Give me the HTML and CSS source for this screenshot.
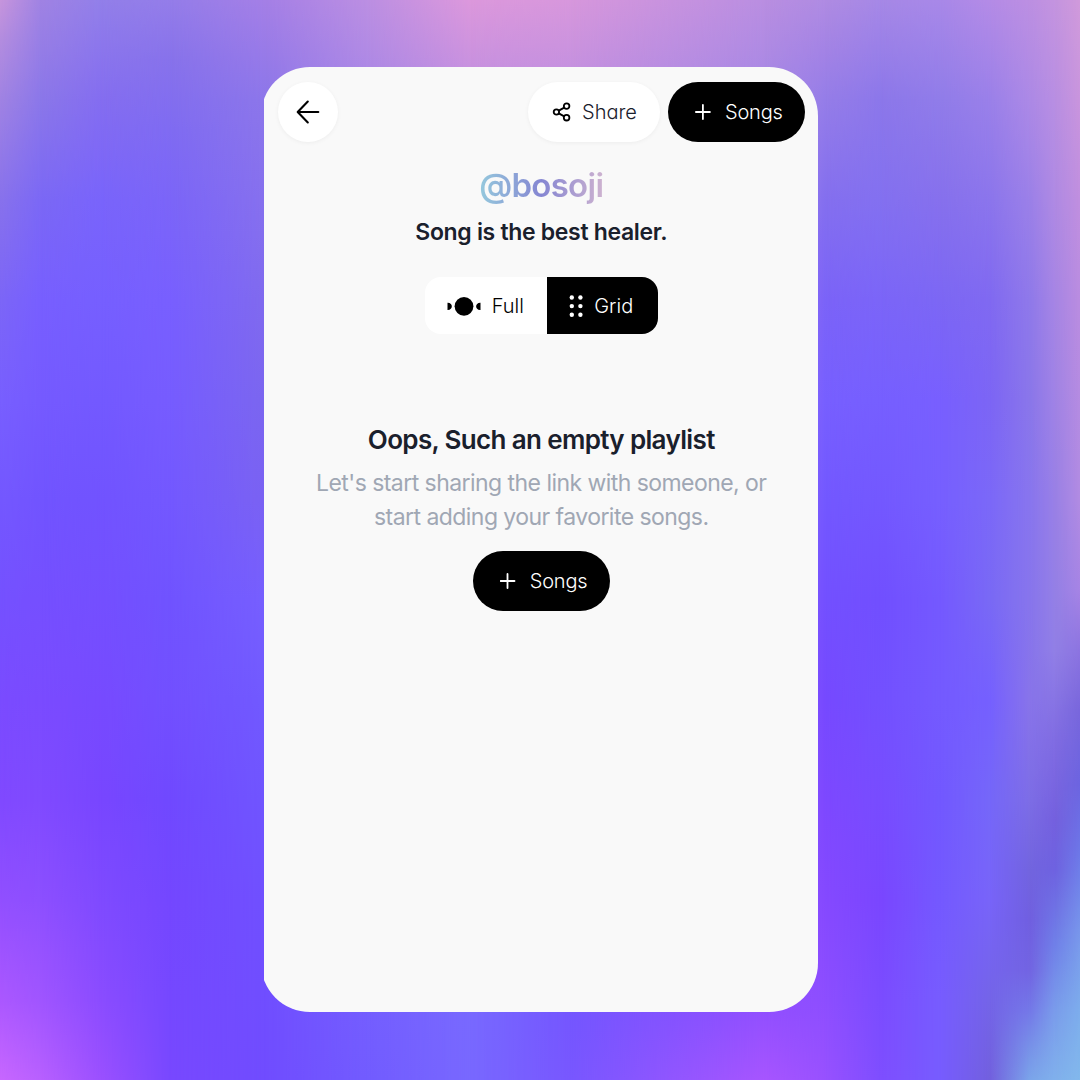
FILE: index.html
```html
<!DOCTYPE html>
<html lang="en">
<head>
<meta charset="utf-8">
<title>@bosoji</title>
<link rel="stylesheet" href="styles.css">
</head>
<body>
<div class="wash wash-1"></div>
<div class="wash wash-2"></div>
<div class="wash wash-3"></div>
<div class="wash wash-4"></div>
<div class="wash wash-5"></div>
<div class="wash wash-6"></div>
<div class="wash wash-7"></div>
<div class="wash wash-8"></div>
<div class="wash wash-9"></div>
<div class="wash wash-10"></div>
<div class="wash wash-11"></div>
<div class="wash wash-12"></div>
<div class="wash wash-13"></div>
<div class="wash wash-14"></div>
<div class="wash wash-15"></div>
<div class="wash wash-16"></div>
<main class="frame">
  <div class="card">
    <header class="topbar">
      <button class="back" aria-label="Back">
        <svg width="24" height="24" viewBox="0 0 24 24" fill="none" stroke="currentColor" stroke-width="2.1" stroke-linecap="round" stroke-linejoin="round"><path d="M22.3 12H2M11.8 1.6L1.7 12L11.8 22.4"/></svg>
      </button>
      <div class="actions">
        <button class="pill pill-light">
          <svg class="share-icon" width="20" height="20" viewBox="0 0 20 20" fill="none" stroke="#000" stroke-width="1.8"><circle cx="4.4" cy="10" r="2.7"/><circle cx="14.6" cy="4.1" r="2.8"/><circle cx="14.6" cy="15.7" r="2.8"/><path d="M6.8 8.6L12.2 5.6M6.8 11.4L12.2 14.4"/></svg>
          <span class="share-label">Share</span>
        </button>
        <button class="pill pill-dark">
          <svg width="16" height="16" viewBox="0 0 16 16" stroke="currentColor" stroke-width="1.8" stroke-linecap="round"><path d="M7.9 1V15M.9 8H14.9"/></svg>
          <span class="songs-label">Songs</span>
        </button>
      </div>
    </header>
    <h1 class="handle">@bosoji</h1>
    <p class="bio">Song is the best healer.</p>
    <div class="toggle">
      <button class="tab tab-full">
        <svg width="34" height="20" viewBox="0 0 34 20" fill="currentColor"><circle cx="17" cy="10.3" r="9.4"/><path d="M.5 6.7C6.3 6.4 6.3 14.2 .5 13.9ZM33.5 6.7C27.7 6.4 27.7 14.2 33.5 13.9Z"/></svg>
        <span class="full-label">Full</span>
      </button>
      <button class="tab tab-grid">
        <svg width="14" height="22" viewBox="0 0 14 22" fill="currentColor"><circle cx="2.8" cy="2.5" r="2.2"/><circle cx="11.4" cy="2.5" r="2.2"/><circle cx="2.8" cy="11.1" r="2.2"/><circle cx="11.4" cy="11.1" r="2.2"/><circle cx="2.8" cy="19.7" r="2.2"/><circle cx="11.4" cy="19.7" r="2.2"/></svg>
        <span class="grid-label">Grid</span>
      </button>
    </div>
    <section class="empty">
      <h2 class="empty-title">Oops, Such an empty playlist</h2>
      <p class="empty-text"><span class="line-one">Let's start sharing the link with someone, or</span><br><span class="line-two">start adding your favorite songs.</span></p>
      <button class="pill pill-dark">
        <svg width="16" height="16" viewBox="0 0 16 16" stroke="currentColor" stroke-width="1.8" stroke-linecap="round"><path d="M7.5 1V15M.5 8H14.5"/></svg>
        <span class="songs-label">Songs</span>
      </button>
    </section>
  </div>
</main>
</body>
</html>
```
FILE: styles.css
```css
* { box-sizing: border-box; }
body {
  margin: 0;
  width: 1080px;
  height: 1080px;
  overflow: hidden;
  display: grid;
  grid-template: 1080px / 1080px;
  font-family: Inter, "Liberation Sans", sans-serif;
  color: #1a202c;
}

/* Backdrop: vertical gradients cross-fading from left to right */
.wash { grid-area: 1 / 1; -webkit-mask-image: var(--fade); mask-image: var(--fade); }
.wash-1 { background: linear-gradient(#c795dc 0, #b48ddf 40px, #a083e3 100px, #8872ec 200px, #7c66f7 300px, #785fff 400px, #7458ff 500px, #7551ff 600px, #7a4bff 700px, #8049ff 800px, #914fff 900px, #ab58ff 1000px, #c867ff 1080px); }
.wash-2 { --fade: linear-gradient(90deg, transparent 0, #000 40px); background: linear-gradient(#a083e3 0, #8b77e9 100px, #7b68f5 200px, #775fff 300px, #755aff 400px, #7154ff 500px, #754fff 600px, #7a4bff 700px, #804aff 800px, #8d4fff 900px, #a055ff 1000px, #b860ff 1080px); }
.wash-3 { --fade: linear-gradient(90deg, transparent 40px, #000 100px); background: linear-gradient(#927fe9 0, #846df0 100px, #7964fb 200px, #765fff 300px, #7359ff 400px, #7153ff 500px, #744fff 600px, #774aff 700px, #7846ff 800px, #7f4aff 900px, #8b4cff 1000px, #9b50ff 1080px); }
.wash-4 { --fade: linear-gradient(90deg, transparent 100px, #000 170px); background: linear-gradient(#947de9 0, #8772eb 60px, #7f6bf2 130px, #7b65f8 200px, #785fff 300px, #765cff 400px, #7358ff 500px, #7053ff 600px, #7250ff 700px, #7049ff 800px, #7447ff 900px, #7548ff 1000px, #7848ff 1080px); }
.wash-5 { --fade: linear-gradient(90deg, transparent 170px, #000 264px); background: linear-gradient(#a47fe6 0, #8c76ea 100px, #8670ee 200px, #806aef 300px, #7b66f0 400px, #7a62f3 500px, #765fff 600px, #7159ff 700px, #7055ff 800px, #7050ff 900px, #704cff 1080px); }
.wash-6 { --fade: linear-gradient(90deg, transparent 264px, #000 370px); background: linear-gradient(#bc8fe2 0, #ae89e5 67px, #745eff 1012px, #725cff 1080px); }
.wash-7 { --fade: linear-gradient(90deg, transparent 370px, #000 470px); background: linear-gradient(#dc98dc 0, #c891df 67px, #7869ff 1012px, #7868ff 1080px); }
.wash-8 { --fade: linear-gradient(90deg, transparent 470px, #000 570px); background: linear-gradient(#d797dc 0, #c691df 67px, #7456ff 1012px, #7857ff 1080px); }
.wash-9 { --fade: linear-gradient(90deg, transparent 570px, #000 765px); background: linear-gradient(#b98ee1 0, #ab89e4 67px, #924fff 1012px, #a755ff 1080px); }
.wash-10 { --fade: linear-gradient(90deg, transparent 765px, #000 825px); background: linear-gradient(#af8be2 0, #a383e5 50px, #957de8 100px, #846fef 200px, #7b63f8 300px, #775fff 400px, #7358ff 500px, #7350ff 600px, #7649ff 700px, #7d48ff 800px, #8549ff 900px, #8d4eff 1000px, #9851ff 1080px); }
.wash-11 { --fade: linear-gradient(90deg, transparent 825px, #000 880px); background: linear-gradient(#a688e6 0, #8c77ea 100px, #8370f0 200px, #7b65f8 300px, #765fff 400px, #7358ff 500px, #714fff 600px, #7350ff 700px, #784cff 800px, #7a46ff 900px, #7b4cff 1000px, #7e4eff 1080px); }
.wash-12 { --fade: linear-gradient(90deg, transparent 880px, #000 940px); background: linear-gradient(#a888e8 0, #907ce9 100px, #8670ed 200px, #7c67f4 300px, #785fff 400px, #765fff 500px, #7459ff 600px, #745aff 700px, #7258ff 800px, #7459ff 900px, #775cff 1000px, #775cff 1080px); }
.wash-13 { --fade: linear-gradient(90deg, transparent 940px, #000 990px); background: linear-gradient(#b48be6 0, #9a80e9 100px, #8b75ec 200px, #8069f1 300px, #7c65f5 400px, #7b68f8 500px, #7969f5 600px, #7560ff 700px, #7567f9 800px, #7864f9 900px, #7464e8 1000px, #7260de 1080px); }
.wash-14 { --fade: linear-gradient(90deg, transparent 990px, #000 1030px); background: linear-gradient(#bc8fe2 0, #ac89e6 100px, #9b80e8 200px, #8f79ea 300px, #8a76ea 400px, #8875ee 500px, #8775ec 600px, #8874ea 700px, #7d6de6 800px, #7264df 870px, #705fe0 920px, #7264e2 970px, #7478e8 1010px, #7890e8 1045px, #7ba5ea 1080px); }
.wash-15 { --fade: linear-gradient(90deg, transparent 1030px, #000 1055px); background: linear-gradient(#c494df 0, #b88ee2 100px, #a685e4 300px, #9980e6 500px, #917fe6 650px, #806ce2 740px, #7460de 820px, #6e62e0 870px, #7080e8 945px, #7a9ceb 1010px, #80b0ec 1080px); }
.wash-16 { --fade: linear-gradient(90deg, transparent 1055px, #000 1080px); background: linear-gradient(#d09adb 0, #c995dd 100px, #c08fdf 200px, #ba8ce0 300px, #b18be2 500px, #a684e4 590px, #8c74e0 650px, #7866dc 710px, #6c64e0 785px, #6d78e8 855px, #7896eb 930px, #7dadec 1010px, #82b8ec 1080px); }

h1, h2, p { margin: 0; }
button {
  border: 0;
  padding: 0;
  font: inherit;
  color: inherit;
  display: flex;
  align-items: center;
}
svg { flex: none; display: block; }
.frame {
  grid-area: 1 / 1;
  z-index: 1;
  width: 554.5px;
  height: 945px;
  margin: 67px 0 0 263.5px;
  overflow: hidden;
}
.card {
  height: 945px;
  margin-left: -2.5px;
  padding: 15px 13px 0 16.5px;
  border-radius: 49px;
  background: #f9f9f9;
  display: flex;
  flex-direction: column;
  align-items: center;
}
.topbar { width: 100%; display: flex; justify-content: space-between; }
.back {
  width: 60px;
  height: 60px;
  border-radius: 50%;
  justify-content: center;
  background: #fff;
  color: #000;
  box-shadow: 0 1px 4px #0000000d;
}
.actions { display: flex; gap: 8px; }
.pill {
  height: 60px;
  border-radius: 30px;
  font-size: 20px;
  font-weight: 300;
  font-feature-settings: "cv11";
}
.pill-light {
  width: 132px;
  padding-left: 24px;
  gap: 10px;
  background: #fff;
  box-shadow: 0 1px 4px #0000000d;
}
.pill-dark {
  width: 137px;
  padding-left: 27px;
  gap: 14px;
  background: #000;
  color: #fff;
}
.songs-label { letter-spacing: -.2px; }
.handle {
  margin-top: 22px;
  font-size: 33px;
  line-height: 42px;
  letter-spacing: -.7px;
  font-weight: 600;
  color: transparent;
  background: linear-gradient(90deg, #95c9dd 0%, #8586d2 50%, #cdb2d0 100%);
  background-clip: text;
  -webkit-background-clip: text;
}
.bio { margin-top: 11px; font-size: 23px; line-height: 30px; letter-spacing: -.32px; font-weight: 600; }
.toggle {
  margin-top: 30px;
  display: flex;
  height: 57px;
  width: 233px;
  border-radius: 16px;
  overflow: hidden;
  font-size: 20px;
  font-weight: 300;
}
.tab-full { width: 122px; padding-left: 22px; gap: 11px; background: #fff; color: #000; }
.tab-grid { width: 111px; padding-left: 22.5px; gap: 11px; background: #000; color: #fff; }
.empty { margin-top: 88px; display: flex; flex-direction: column; align-items: center; }
.empty-title { font-size: 26px; line-height: 36px; letter-spacing: -.65px; font-weight: 600; }
.empty-text { margin-top: 8px; text-align: center; font-size: 23px; line-height: 34px; letter-spacing: -.55px; color: #a0a7b4; }
.empty .pill { margin-top: 17px; }
```
